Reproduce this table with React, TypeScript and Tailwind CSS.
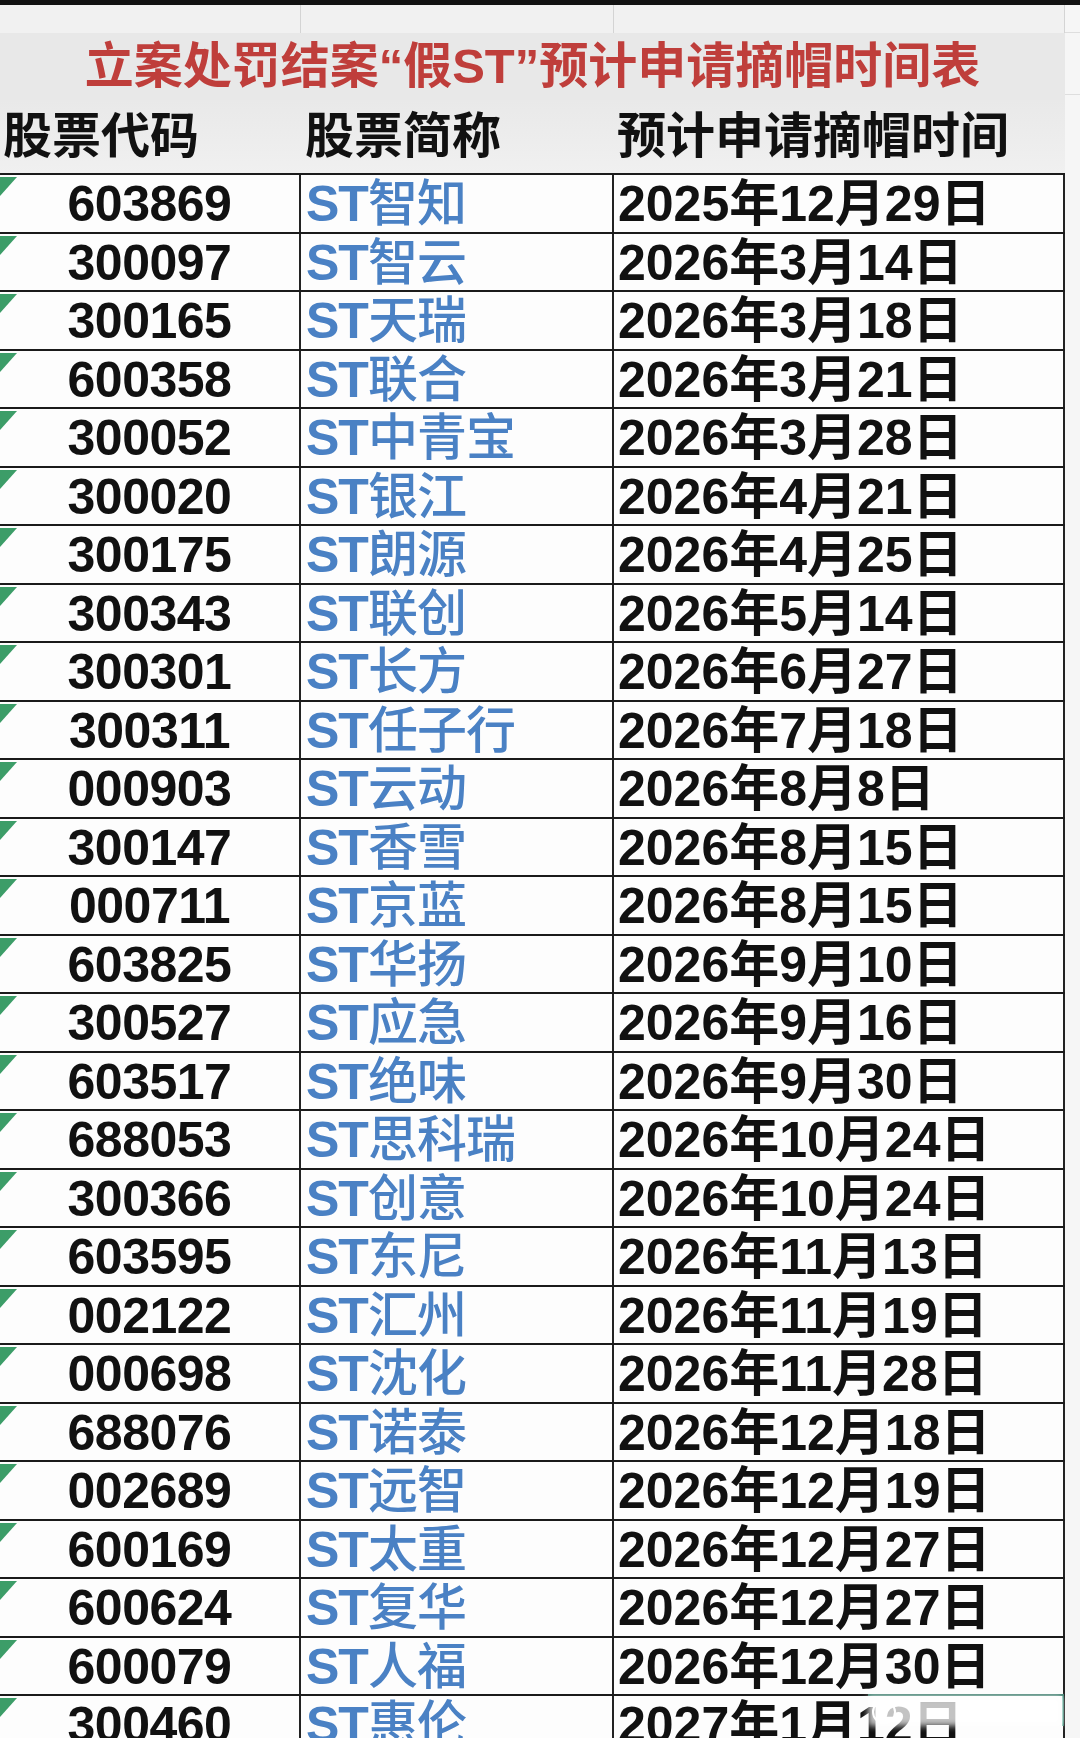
import React from "react";

const rows: [string, string, string][] = [
  ["603869", "智知", "2025年12月29日"],
  ["300097", "智云", "2026年3月14日"],
  ["300165", "天瑞", "2026年3月18日"],
  ["600358", "联合", "2026年3月21日"],
  ["300052", "中青宝", "2026年3月28日"],
  ["300020", "银江", "2026年4月21日"],
  ["300175", "朗源", "2026年4月25日"],
  ["300343", "联创", "2026年5月14日"],
  ["300301", "长方", "2026年6月27日"],
  ["300311", "任子行", "2026年7月18日"],
  ["000903", "云动", "2026年8月8日"],
  ["300147", "香雪", "2026年8月15日"],
  ["000711", "京蓝", "2026年8月15日"],
  ["603825", "华扬", "2026年9月10日"],
  ["300527", "应急", "2026年9月16日"],
  ["603517", "绝味", "2026年9月30日"],
  ["688053", "思科瑞", "2026年10月24日"],
  ["300366", "创意", "2026年10月24日"],
  ["603595", "东尼", "2026年11月13日"],
  ["002122", "汇州", "2026年11月19日"],
  ["000698", "沈化", "2026年11月28日"],
  ["688076", "诺泰", "2026年12月18日"],
  ["002689", "远智", "2026年12月19日"],
  ["600169", "太重", "2026年12月27日"],
  ["600624", "复华", "2026年12月27日"],
  ["600079", "人福", "2026年12月30日"],
  ["300460", "惠伦", "2027年1月12日"],
];

export default function App() {
  return (
    <div className="relative w-[1080px] h-[1738px] overflow-hidden bg-[#f4f4f4] font-['Liberation_Sans','Noto_Sans_CJK_SC',sans-serif]">
      <div className="h-[5px] bg-[#121212]" />
      <div className="flex">
        <div className="w-[1065px] shrink-0">
          <div className="grid grid-cols-[301px_313px_451px] h-[28px] bg-[#f1f1f1]">
            <div className="border-r border-[#d4d4d4]" />
            <div className="border-r border-[#d4d4d4]" />
            <div className="border-r border-[#d4d4d4]" />
          </div>
          <div className="h-[67px] bg-[#e8e8e8] flex items-center justify-center text-[49px] font-bold leading-none text-[#bf3e3b] whitespace-nowrap">
            立案处罚结案“假ST”预计申请摘帽时间表
          </div>
          <div className="h-[73px] bg-gradient-to-b from-[#e9e9e9] to-[#f0f0f0] grid grid-cols-[301px_313px_451px] items-center text-[49px] font-bold leading-none text-[#111] whitespace-nowrap">
            <div className="pl-[3px]">股票代码</div>
            <div className="pl-[4px]">股票简称</div>
            <div className="pl-[3px]">预计申请摘帽时间</div>
          </div>
          <div className="border-t-2 border-[#1b1b1b] bg-[#fdfdfd]">
            {rows.map(([code, name, date]) => (
              <div
                key={code}
                className="grid grid-cols-[301px_313px_451px] h-[58.5px] border-b-2 border-[#1b1b1b] text-[50px] leading-none whitespace-nowrap"
              >
                <div className="relative border-r-2 border-[#222] flex items-center justify-center pt-[2px] font-bold text-[#111] tracking-[-0.5px]">
                  <svg
                    className="absolute left-0 top-[2px]"
                    width="18"
                    height="20"
                    viewBox="0 0 18 20"
                  >
                    <polygon points="0,0 17,0 0,19" fill="#3c9d68" />
                  </svg>
                  {code}
                </div>
                <div className="border-r-2 border-[#222] flex items-center pl-[5px] pt-[2px] text-[#4a81c4] tracking-[-1px]">
                  <span className="font-bold">ST</span>
                  <span className="font-medium">{name}</span>
                </div>
                <div className="border-r-2 border-[#222] flex items-center pl-[4px] pt-[2px] font-bold text-[#111]">
                  {date}
                </div>
              </div>
            ))}
          </div>
        </div>
        <div className="flex-1 flex flex-col bg-[#f6f6f6]">
          <div className="h-[28px] border-b border-[#dedede]" />
          <div className="h-[62px] border-b border-[#dedede]" />
          <div className="flex-1" />
        </div>
      </div>
      <div className="absolute left-[868px] top-[1694px] w-[196px] h-[32px] border-t-2 border-r-2 border-[#4aa58f]/70">
        <div className="absolute left-0 top-0 w-full h-full bg-white/75 blur-[3px]" />
        <div className="absolute left-[4px] top-[4px] w-[24px] h-[24px] rounded-full border-2 border-white" />
      </div>
    </div>
  );
}
